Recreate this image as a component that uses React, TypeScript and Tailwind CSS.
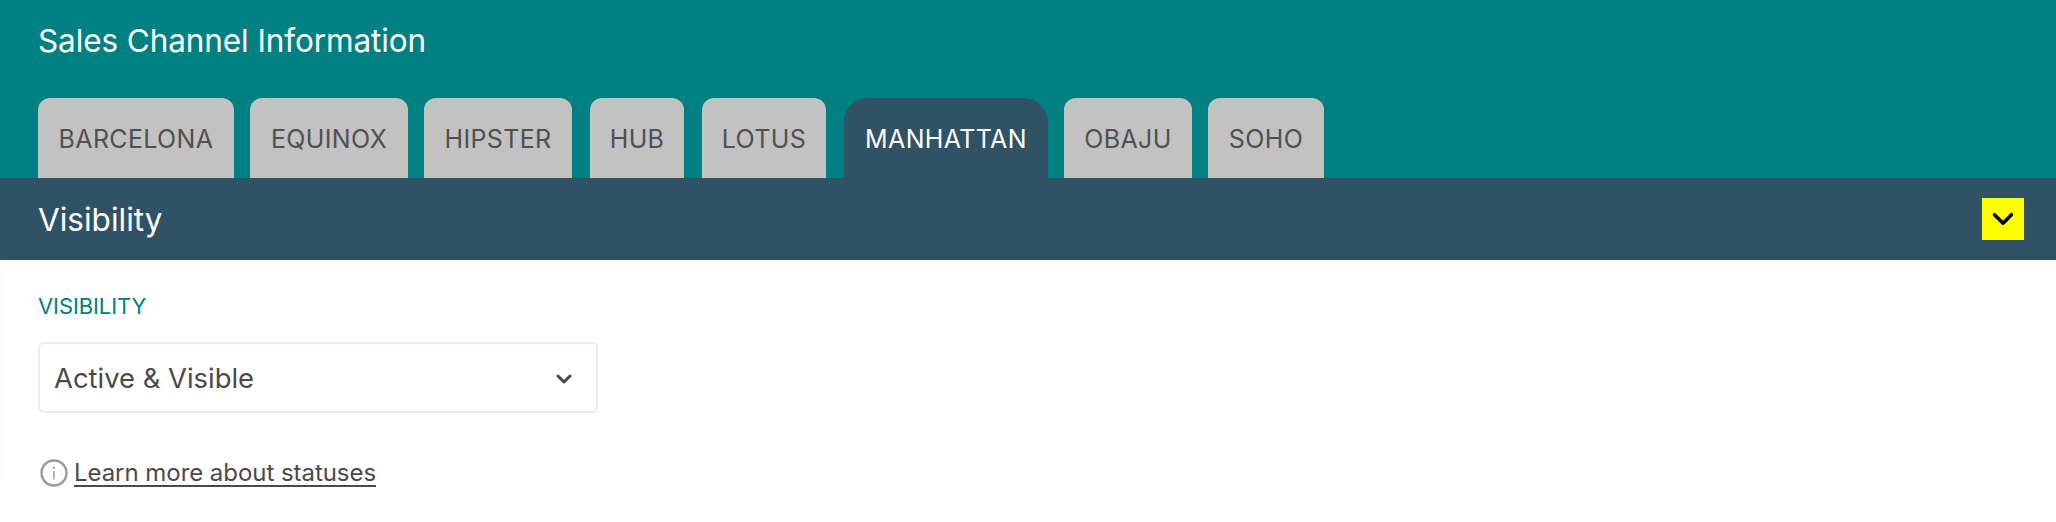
import { ChevronDown } from "lucide-react";

const tabs = [
  { name: "BARCELONA", className: "w-[196px]" },
  { name: "EQUINOX", className: "w-[158px]" },
  { name: "HIPSTER", className: "w-[148px]" },
  { name: "HUB", className: "ml-[2px] w-[94px]" },
  { name: "LOTUS", className: "ml-[2px] w-[124px]" },
  { name: "MANHATTAN", className: "ml-[2px] w-[204px]", active: true },
  { name: "OBAJU", className: "w-[128px]" },
  { name: "SOHO", className: "w-[116px]" },
];

export default function App() {
  return (
    <div className="min-h-[522px] bg-white font-['Inter',sans-serif] text-[#4a4a4a]">
      <div className="bg-[#008080] px-[38px]">
        <h1 className="h-[98px] pt-[22px] text-[31.5px] leading-[38px] font-normal tracking-[-0.1px] text-white">
          Sales Channel Information
        </h1>
        <div className="flex h-[80px] gap-4">
          {tabs.map((tab) => (
            <div
              key={tab.name}
              className={
                tab.active
                  ? `flex ${tab.className} justify-center rounded-t-[24px] bg-[#2f5264] pt-[25px] text-[25px] leading-[32px] tracking-[0.35px] text-white`
                  : `flex ${tab.className} justify-center rounded-t-[12px] bg-[#c2c2c2] pt-[25px] text-[25px] leading-[32px] tracking-[0.35px] text-[#505050]`
              }
            >
              {tab.name}
            </div>
          ))}
        </div>
      </div>

      <div className="flex h-[82px] items-center justify-between bg-[#2f5264] pr-8 pl-[38px]">
        <h2 className="pt-[1px] text-[31.5px] leading-[38px] font-normal text-white">Visibility</h2>
        <button className="flex h-[42px] w-[42px] items-center justify-center bg-[#ffff00] text-black">
          <ChevronDown size={34} strokeWidth={2.5} />
        </button>
      </div>

      <div className="h-[226px] border-l border-[#fbfbfb] pt-[32px] pr-[38px] pl-[37px]">
        <label className="block text-[22px] leading-[28px] tracking-[-0.1px] text-[#008080]">VISIBILITY</label>
        <div className="mt-[22px] flex h-[71px] w-[560px] items-center justify-between rounded-md border-2 border-[#ecebf2] pt-[3px] pr-[20px] pl-[14px] text-[27.4px]">
          <span>Active &amp; Visible</span>
          <ChevronDown size={24} strokeWidth={3} />
        </div>
        <div className="mt-[44px] flex h-[32px] items-center gap-[6px] text-[24px] leading-[32px] tracking-[-0.05px]">
          <svg width="30" height="30" viewBox="0 0 30 30" fill="none" className="shrink-0 text-[#9b9b9b]">
            <circle cx="16" cy="15" r="12.5" stroke="currentColor" strokeWidth="2.4" />
            <path d="M16 13.5V21" stroke="currentColor" strokeWidth="1.4" strokeLinecap="round" />
            <circle cx="16" cy="9.8" r="1.1" fill="currentColor" />
          </svg>
          <a className="underline decoration-2 underline-offset-4">Learn more about statuses</a>
        </div>
      </div>
    </div>
  );
}
